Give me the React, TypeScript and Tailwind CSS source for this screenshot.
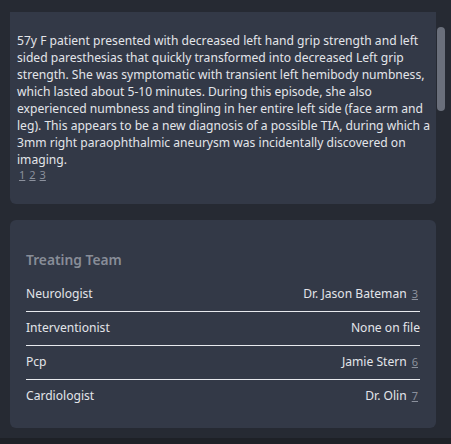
import React from "react";

const font = { fontFamily: '"Noto Sans", "Open Sans", sans-serif' };

const team = [
  { role: "Neurologist", name: "Dr. Jason Bateman", cite: "3" },
  { role: "Interventionist", name: "None on file", cite: "" },
  { role: "Pcp", name: "Jamie Stern", cite: "6" },
  { role: "Cardiologist", name: "Dr. Olin", cite: "7" },
];

export default function App() {
  return (
    <div className="h-[444px] w-[451px] overflow-hidden bg-[#262a33] flex flex-col" style={font}>
      {/* Summary scroll area */}
      <div className="mt-[12px] ml-[10px] flex h-[192px]">
        <div className="w-[426px] bg-[#333947] rounded-b-md pl-[7px] pr-[6px] pt-[20px] text-[12.1px] leading-[17px] text-[#e3e5ea]">
          <p>
            57y F patient presented with decreased left hand grip strength and left sided paresthesias that
            quickly transformed into decreased Left grip strength. She was symptomatic with transient left
            hemibody numbness, which lasted about 5-10 minutes. During this episode, she also experienced
            numbness and tingling in her entire left side (face arm and leg). This appears to be a new
            diagnosis of a possible TIA, during which a 3mm right paraophthalmic aneurysm was incidentally
            discovered on imaging.
          </p>
          <div className="flex gap-[4px] pl-[2px] text-[11px] leading-[14px] text-[#8b909c]">
            <span className="underline">1</span>
            <span className="underline">2</span>
            <span className="underline">3</span>
          </div>
        </div>
        <div className="w-[10px] pl-[1px]">
          <div className="mt-[15px] h-[84px] w-[8px] rounded-full bg-[#6a6f7b]" />
        </div>
      </div>

      {/* Treating team */}
      <div className="mt-[16px] ml-[10px] w-[426px] h-[208px] rounded-md bg-[#333947] px-[16px] pt-[30px]">
        <h2 className="text-[13.8px] leading-[20px] font-semibold text-[#888d98]">Treating Team</h2>
        <div className="mt-[8px] flex flex-col text-[12.1px] text-[#e3e5ea]">
          {team.map((t, i) => (
            <div
              key={t.role}
              className={
                "flex items-center justify-between h-[34px] pb-[1px] " +
                (i < team.length - 1 ? "border-b border-[#e8eaee]" : "")
              }
            >
              <span>{t.role}</span>
              <span className="flex items-center gap-[5px]">
                <span>{t.name}</span>
                {t.cite && <span className="underline text-[#8b909c] text-[11px] pr-[2px]">{t.cite}</span>}
              </span>
            </div>
          ))}
        </div>
      </div>

      <div className="mt-[10px] flex-1 bg-[#1e2127]" />
    </div>
  );
}
